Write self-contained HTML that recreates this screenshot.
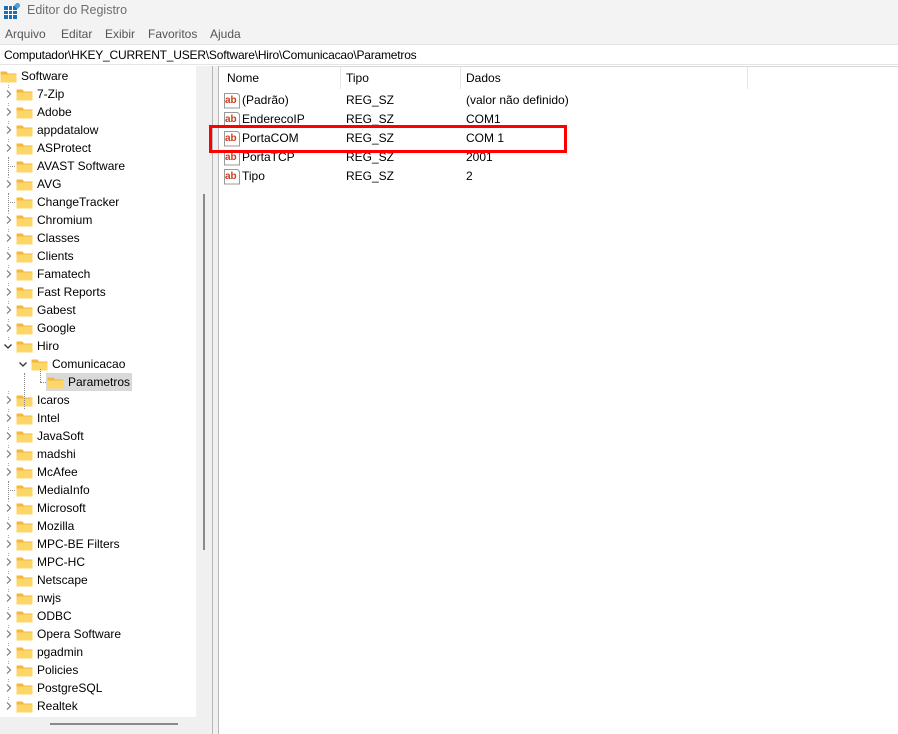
<!DOCTYPE html>
<html><head><meta charset="utf-8"><style>
*{margin:0;padding:0;box-sizing:border-box}
body{width:898px;height:734px;overflow:hidden;background:#fff;font-family:"Liberation Sans",sans-serif;font-size:12px;color:#000;position:relative}
.title{position:absolute;left:0;top:0;width:898px;height:22px;background:#f3f3f3;color:#6e6e6e;font-size:12.5px}
.menu{position:absolute;left:0;top:22px;width:898px;height:22px;background:#f3f3f3;color:#555}
.menu span{position:absolute;top:5px}
.addr{position:absolute;left:0;top:44px;width:898px;height:21px;background:#fff;border-top:1px solid #e5e5e5;border-bottom:1px solid #e5e5e5}
.tree{position:absolute;left:0;top:66px;width:196px;height:668px;overflow:hidden}
.row{position:absolute;height:18px;line-height:18px;white-space:nowrap}
.fold{position:absolute;width:17px;height:13px}
.chev{position:absolute;width:8px;height:8px}
.vs{position:absolute;left:196px;top:66px;width:16px;height:668px;background:#f0f0f0}
.list{position:absolute;left:219px;top:66px;width:679px;height:668px}
.r{position:absolute;height:19px;line-height:19px;white-space:nowrap}
</style></head><body>
<div class="title">
<svg style="position:absolute;left:4px;top:3px" width="16" height="16"><rect x="0" y="3" width="13" height="13" fill="#1c6fb5"/><g fill="#fff"><rect x="4" y="3" width="1" height="13"/><rect x="8" y="3" width="1" height="13"/><rect x="0" y="7" width="13" height="1"/><rect x="0" y="11" width="13" height="1"/></g><rect x="11" y="0" width="5" height="5" fill="#4aa3e0" transform="rotate(45 13.5 2.5)"/></svg>
<span style="position:absolute;left:27px;top:3px">Editor do Registro</span></div>
<div class="menu"><span style="left:5px">Arquivo</span><span style="left:61px">Editar</span><span style="left:105px">Exibir</span><span style="left:148px">Favoritos</span><span style="left:210px">Ajuda</span></div>
<div class="addr"><span style="position:absolute;left:4px;top:3px;letter-spacing:-0.2px">Computador\HKEY_CURRENT_USER\Software\Hiro\Comunicacao\Parametros</span></div>
<div class="tree" id="tree"></div>
<div class="vs"><div style="position:absolute;left:7px;top:128px;width:2px;height:356px;background:#8a8a8a"></div></div>
<div style="position:absolute;left:0;top:717px;width:196px;height:17px;background:#f0f0f0"></div>
<div style="position:absolute;left:50px;top:723px;width:128px;height:2px;background:#8a8a8a"></div>
<div style="position:absolute;left:212px;top:66px;width:1px;height:668px;background:#b8b8b8"></div>
<div style="position:absolute;left:213px;top:66px;width:5px;height:668px;background:#f0f0f0"></div>
<div style="position:absolute;left:218px;top:66px;width:1px;height:668px;background:#b8b8b8"></div>
<div class="list" id="list">
<div style="position:absolute;left:0;top:0;width:679px;height:1px;background:#d8d8d8"></div>
<div class="r" style="left:8px;top:3px">Nome</div>
<div class="r" style="left:127px;top:3px">Tipo</div>
<div class="r" style="left:247px;top:3px">Dados</div>
<div style="position:absolute;left:121px;top:1px;width:1px;height:22px;background:#e5e5e5"></div>
<div style="position:absolute;left:241px;top:1px;width:1px;height:22px;background:#e5e5e5"></div>
<div style="position:absolute;left:528px;top:1px;width:1px;height:22px;background:#e5e5e5"></div>
</div>
<div style="position:absolute;left:209px;top:125px;width:358px;height:28px;border:3px solid #f00"></div>
<script>
const items=[["Software",0,0,""],["7-Zip",1,1],["Adobe",1,1],["appdatalow",1,1],["ASProtect",1,1],["AVAST Software",1,0],["AVG",1,1],["ChangeTracker",1,0],["Chromium",1,1],["Classes",1,1],["Clients",1,1],["Famatech",1,1],["Fast Reports",1,1],["Gabest",1,1],["Google",1,1],["Hiro",1,2],["Comunicacao",2,2],["Parametros",3,0],["Icaros",1,1],["Intel",1,1],["JavaSoft",1,1],["madshi",1,1],["McAfee",1,1],["MediaInfo",1,0],["Microsoft",1,1],["Mozilla",1,1],["MPC-BE Filters",1,1],["MPC-HC",1,1],["Netscape",1,1],["nwjs",1,1],["ODBC",1,1],["Opera Software",1,1],["pgadmin",1,1],["Policies",1,1],["PostgreSQL",1,1],["Realtek",1,1]];
const F='<path d="M0.5 1.5h6l1.5 2h8.5v9h-16z" fill="#f4b73b"/><path d="M0.5 4.5h16v8h-16z" fill="#fcd667"/>';
let h='';
items.forEach((it,i)=>{const [n,l,e]=it;const y=1+i*18;const fx=l==0?0:(l==1?16:(l==2?31:47));
if(l==3)h+=`<div style="position:absolute;left:40px;top:${y-4}px;width:1px;height:13px;border-left:1px dotted #888"></div><div style="position:absolute;left:40px;top:${y+9}px;width:6px;border-top:1px dotted #888"></div><div style="position:absolute;left:46px;top:${y}px;width:86px;height:18px;background:#d9d9d9"></div>`;
if(e==1)h+=`<svg class="chev" style="left:${fx-11}px;top:${y+5}px"><path d="M2 0.5l3.5 3.5l-3.5 3.5" stroke="#777" fill="none" stroke-width="1.2"/></svg>`;
if(e==2)h+=`<svg class="chev" style="left:${fx-12}px;top:${y+6}px"><path d="M0.5 1.5l3.5 3.5l3.5-3.5" stroke="#333" fill="none" stroke-width="1.3"/></svg>`;
if(e==0&&l==1)h+=`<div style="position:absolute;left:8px;top:${y+9}px;width:7px;border-top:1px dotted #888"></div><div style="position:absolute;left:8px;top:${y}px;height:18px;border-left:1px dotted #888"></div>`;
if(l==1&&e!=0)h+=`<div style="position:absolute;left:8px;top:${y}px;height:3px;border-left:1px dotted #aaa"></div>`;
h+=`<svg class="fold" style="left:${fx}px;top:${y+3}px">${F}</svg>`;
h+=`<div class="row" style="left:${fx+21}px;top:${y}px">${n}</div>`;});
h+='<div style="position:absolute;left:24px;top:307px;height:36px;border-left:1px dotted #888"></div>';
h+=`<svg class="fold" style="left:16px;top:${1+36*18+3}px">${F}</svg>`;
document.getElementById('tree').innerHTML=h;
const rows=[["(Padrão)","REG_SZ","(valor não definido)"],["EnderecoIP","REG_SZ","COM1"],["PortaCOM","REG_SZ","COM 1"],["PortaTCP","REG_SZ","2001"],["Tipo","REG_SZ","2"]];
let g='';rows.forEach((r,i)=>{const y=25+i*19;
g+=`<svg style="position:absolute;left:5px;top:${y+1}px" width="17" height="17"><path d="M0.5 1.5h13l2 2v12.5h-15z" fill="#fff" stroke="#999"/><text x="1" y="11" font-family="Liberation Sans" font-weight="bold" font-size="10" fill="#d03a1a">ab</text></svg>`;
g+=`<div class="r" style="left:23px;top:${y}px">${r[0]}</div><div class="r" style="left:127px;top:${y}px">${r[1]}</div><div class="r" style="left:247px;top:${y}px">${r[2]}</div>`;});
document.getElementById('list').innerHTML+=g;
</script>
</body></html>
